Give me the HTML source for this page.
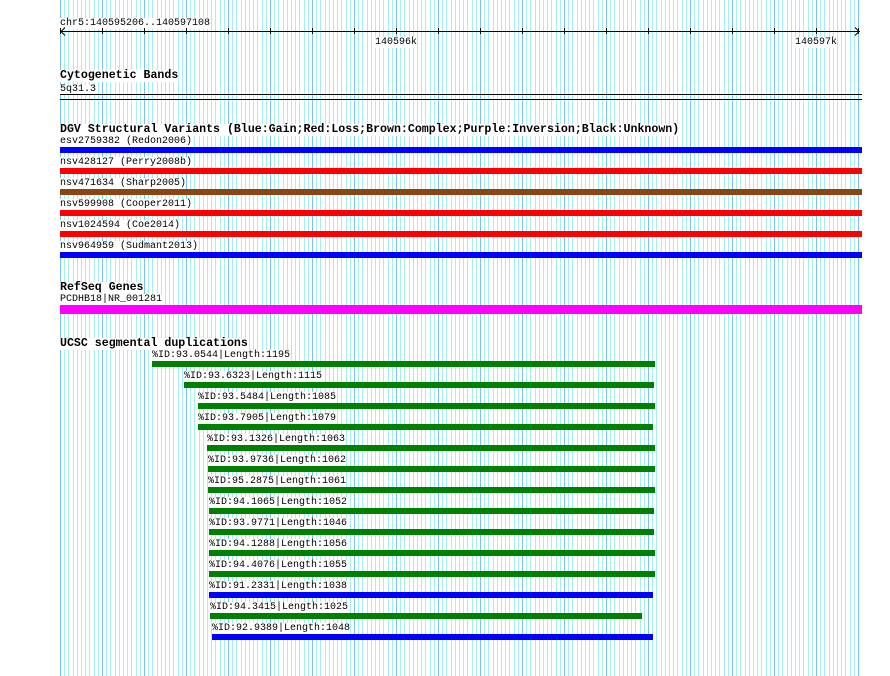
<!DOCTYPE html>
<html><head><meta charset="utf-8"><style>
html,body{margin:0;padding:0;background:#fff;width:890px;height:676px;overflow:hidden}
svg{display:block}
rect{shape-rendering:crispEdges}
text{font-family:"Liberation Mono","DejaVu Sans Mono",monospace;font-size:10px;fill:#000}
.t{font-size:11.6px;font-weight:bold}
</style></head><body>
<svg id="s" width="890" height="676" xmlns="http://www.w3.org/2000/svg">
<g id="grid"></g>
<g id="bgs"></g>
<g id="fg">
<line x1="61" y1="31.5" x2="860" y2="31.5" stroke="#000" shape-rendering="crispEdges"/>
<path d="M65 27.5 L61 31.5 L65 35.5 M855 27.5 L859 31.5 L855 35.5" stroke="#000" fill="none"/>
<g id="ticks"></g>
<text x="60" y="25" class="b">chr5:140595206..140597108</text>
<text x="396" y="44" text-anchor="middle" class="b">140596k</text>
<text x="816" y="44" text-anchor="middle" class="b">140597k</text>

<text x="60" y="78" class="t b">Cytogenetic Bands</text>
<text x="60" y="91" class="b">5q31.3</text>
<rect x="60" y="94" width="802" height="1" fill="#000"/>
<rect x="60" y="99" width="802" height="1" fill="#000"/>

<text x="60" y="132" class="t b">DGV Structural Variants (Blue:Gain;Red:Loss;Brown:Complex;Purple:Inversion;Black:Unknown)</text>
<text x="60" y="143" class="b">esv2759382 (Redon2006)</text>
<rect x="60" y="147" width="802" height="6" fill="#0000ff"/>
<text x="60" y="164" class="b">nsv428127 (Perry2008b)</text>
<rect x="60" y="168" width="802" height="6" fill="#ff0000"/>
<text x="60" y="185" class="b">nsv471634 (Sharp2005)</text>
<rect x="60" y="189" width="802" height="6" fill="#8b4513"/>
<text x="60" y="206" class="b">nsv599908 (Cooper2011)</text>
<rect x="60" y="210" width="802" height="6" fill="#ff0000"/>
<text x="60" y="227" class="b">nsv1024594 (Coe2014)</text>
<rect x="60" y="231" width="802" height="6" fill="#ff0000"/>
<text x="60" y="248" class="b">nsv964959 (Sudmant2013)</text>
<rect x="60" y="252" width="802" height="6" fill="#0000ff"/>

<text x="60" y="290" class="t b">RefSeq Genes</text>
<text x="60" y="301" class="b">PCDHB18|NR_001281</text>
<rect x="60" y="305" width="802" height="9" fill="#ff00ff"/>

<text x="60" y="346" class="t b">UCSC segmental duplications</text>
<g id="seg"></g>
</g>
</svg>
<script>
var NS="http://www.w3.org/2000/svg";
function el(n,a,p){var e=document.createElementNS(NS,n);for(var k in a)e.setAttribute(k,a[k]);p.appendChild(e);return e;}
var g=document.getElementById('grid');
for(var i=0;i<=190;i++){var x=Math.round(60+i*4.2);var maj=(i%10==0);
el('rect',{x:x,y:0,width:1,height:676,fill:maj?'#7cc4ee':'#a6eef0'},g);}
var tk=document.getElementById('ticks');
for(var k=0;k<=19;k++){var x=60+k*42;el('rect',{x:x,y:28,width:1,height:6,fill:'#000'},tk);}
var segs=[[152,655,'93.0544','1195','g'],[184,654,'93.6323','1115','g'],[198,655,'93.5484','1085','g'],[198,653,'93.7905','1079','g'],[207,655,'93.1326','1063','g'],[208,655,'93.9736','1062','g'],[208,655,'95.2875','1061','g'],[209,654,'94.1065','1052','g'],[209,654,'93.9771','1046','g'],[209,655,'94.1288','1056','g'],[209,655,'94.4076','1055','g'],[209,653,'91.2331','1038','b'],[210,642,'94.3415','1025','g'],[212,653,'92.9389','1048','b']];
var sg=document.getElementById('seg');
segs.forEach(function(s,j){var y=361+21*j;
var t=el('text',{x:s[0],y:y-4,'class':'b'},sg);t.textContent='%ID:'+s[2]+'|Length:'+s[3];
el('rect',{x:s[0],y:y,width:s[1]-s[0],height:6,fill:s[4]=='g'?'#008000':'#0000ff'},sg);});
var bg=document.getElementById('bgs');
document.querySelectorAll('text.b').forEach(function(t){var b=t.getBBox();
el('rect',{x:b.x,y:b.y+1,width:b.width,height:b.height-1,fill:'#fff'},bg);});
</script>
</body></html>
